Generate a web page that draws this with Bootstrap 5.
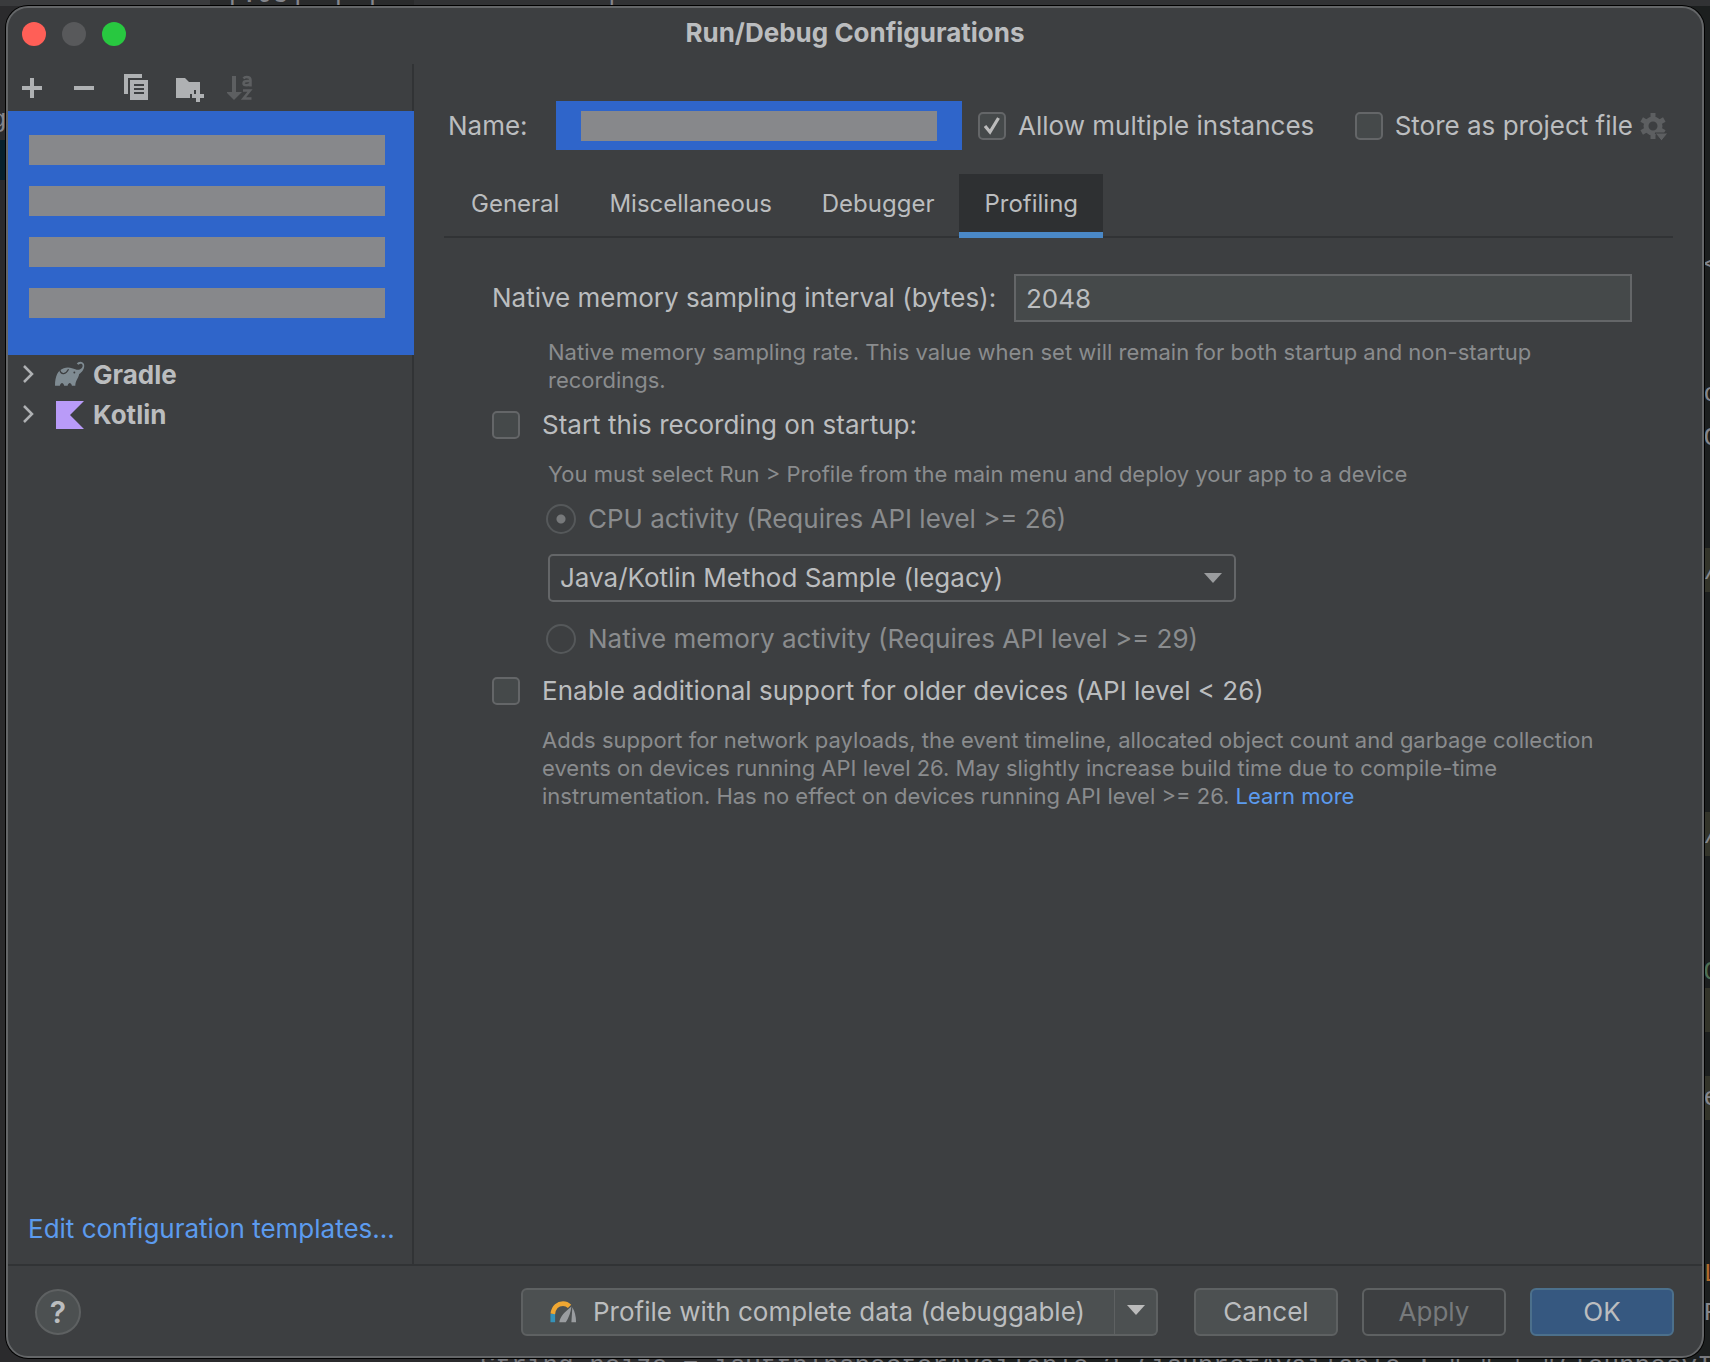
<!DOCTYPE html>
<html lang="en" data-bs-theme="dark">
<head>
<meta charset="utf-8">
<meta name="viewport" content="width=device-width, initial-scale=1">
<title>Run/Debug Configurations</title>
<link href="https://cdn.jsdelivr.net/npm/bootstrap@5.3.0/dist/css/bootstrap.min.css" rel="stylesheet">
<style>
:root{--panel:#3d3f41;--line:#313335;--edge:#646668;--ink:#bbbdbf;--dim:#8a8c8e;--field:#45494a;--sel:#2f65ca;--redact:#87888b;--link:#5c9bee}
body{font-family:Inter,"Liberation Sans",sans-serif;font-size:26px;line-height:32px;color:var(--ink);background:#1f2021;min-height:100vh;overflow:hidden}
.stage{min-height:100vh;padding:6px 6px 4px}
/* editor behind the dialog */
.backdrop{position:absolute;inset:0;overflow:hidden;font-family:"Liberation Mono",monospace;font-size:26px;line-height:32px;color:#85868c;background:linear-gradient(90deg,#2b2b2d 50%,#1c1f1f 50%)}
.backdrop span{position:absolute;white-space:pre}
.backdrop .bd-top{left:0;top:0;height:6px;right:0;background:linear-gradient(90deg,#3a3b3d 210px,#2a2b2c 210px 414px,#313234 414px)}
.backdrop .bd-bottom{left:480px;bottom:-20px;color:#77787d}
.backdrop .bd-strip{right:0;width:6px;height:44px;background:#33342a}
.backdrop .bd-char{right:-9px}
.backdrop .bd-left{left:0;top:140px;width:6px;height:40px;background:#07212c}
.dialog{position:relative;flex:1;background:var(--panel);border:2px solid var(--edge);border-radius:22px;box-shadow:0 0 0 1px #000;overflow:hidden}
.titlebar{height:56px;display:grid;grid-template-columns:1fr auto 1fr;align-items:center;padding:0 14px 4px}
.titlebar h1{font-size:26px;line-height:32px;font-weight:700;margin:0;padding-bottom:2px;color:var(--ink)}
.light{width:24px;height:24px;border-radius:50%;border:0;padding:0}
.l-close{background:#ff5f57}.l-min{background:#58595b}.l-zoom{background:#28c840}
.sidebar{width:406px;border-right:2px solid var(--line)}
.tools{height:47px;padding:0 14px}
.tools button,.gear{background:none;border:0;padding:0;color:#afb1b3;display:block;line-height:0}
.tools button:disabled{color:#5d5f61}
.picked{background:var(--sel);height:244px;padding:24px 29px 0 21px;gap:21px;margin-right:-2px}
.redact{background:var(--redact);height:30px}
.node{height:40px;padding-left:14px;font-weight:700}
a{color:var(--link);text-decoration:none}
.edit-link{margin:0 0 19px 20px}
.main{padding:37px 29px 0 30px}
.name-label{flex:0 0 112px;padding-left:4px}
.namebox{width:406px;height:49px;background:var(--sel);border:0;padding:0 25px}
.multi{margin-left:16px;gap:12px}
.store{gap:12px}
.gear{margin-left:7px}
.tick{appearance:none;width:28px;height:28px;margin:0;flex:none;background:var(--field);border:2px solid var(--edge);border-radius:5px}
.tick:checked{background:var(--field) url("data:image/svg+xml,%3Csvg xmlns='http://www.w3.org/2000/svg' viewBox='0 0 24 24'%3E%3Cpath d='M5 12l5 6L18.500 4' fill='none' stroke='%23bbb' stroke-width='3.200'/%3E%3C/svg%3E") center/24px 24px no-repeat}
.dot{appearance:none;width:30px;height:30px;margin:0;flex:none;border:2px solid #55585a;border-radius:50%}
.dot:checked{background:radial-gradient(circle,#77797b 4px,transparent 5px)}
.nav-tabs{--bs-nav-tabs-border-width:0;height:64px;border-bottom:2px solid var(--line);padding-left:2px}
.nav-tabs .nav-link{height:64px;padding:0 25px 4px;font-size:24px;color:var(--ink);border:0;border-radius:0;margin:0}
.nav-tabs .nav-link.active{background:#2e3032;color:var(--ink);border-bottom:6px solid #4a88c7;padding:2px 25px 0}
.pane{padding:36px 41px 0 48px}
.interval label{flex:0 0 522px}
.box{height:48px;background:var(--field);border:2px solid var(--edge);border-radius:0;color:var(--ink);padding:0 10px;min-width:0}
.hint{font-size:22px;line-height:28px;color:var(--dim);margin:16px 0 15px}
.hint.deep{margin-left:56px}
.hint.flat{margin-left:50px}
.opt{gap:22px}
.opt + .hint{margin-top:19px}
.rad{margin-left:54px;gap:12px;color:var(--dim)}
.pick{position:relative;width:688px;margin:19px 0 21px 56px}
.pick select{appearance:none;display:block;width:100%;height:48px;background:transparent;border:2px solid var(--edge);border-radius:5px;color:var(--ink);padding:0 10px}
.pick svg{position:absolute;right:14px;top:19px;pointer-events:none}
.footer{height:92px;border-top:2px solid var(--line);padding:2px 28px 0 27px;gap:24px}
.act{height:48px;width:144px;border:2px solid #5e6162;border-radius:6px;background:#4c5051;color:var(--ink);line-height:32px;padding:0}
.act.plain{background:transparent;color:#777a7c}
.act.go{background:#365880;border-color:#4c708c}
.split{margin-right:12px}
.act.wide{width:594px;border-radius:6px 0 0 6px;border-right-width:1px;padding-left:27px;text-align:left}
.act.more{width:43px;border-radius:0 6px 6px 0;border-left-width:0}
.act.more svg{display:block;margin:0 auto}
.help{width:46px;height:46px;border-radius:50%;border:2px solid #5e6162;background:#4c5051;color:var(--ink);font-weight:600;font-size:30px;line-height:32px;padding:0}
</style>
<script src="https://cdn.jsdelivr.net/npm/bootstrap@5.3.0/dist/js/bootstrap.bundle.min.js" defer></script>
</head>
<body>
<div class="backdrop" aria-hidden="true">
<span class="bd-top"></span><span class="bd-left"></span>
<span style="left:226px;top:-21px">[:JU]</span><span style="left:332px;top:-21px">[-]</span><span style="left:604px;top:-21px">|</span>
<span style="left:-9px;top:104px">g</span>
<span class="bd-bottom">String noize = isHttpInspectorAvailable ? (isHprofAvailable : " " + "(TouhposvIntegram</span>
<span class="bd-strip" style="top:548px"></span><span class="bd-strip" style="top:812px"></span><span class="bd-strip" style="top:988px"></span><span class="bd-strip" style="top:1076px"></span>
<span class="bd-char" style="top:249px">&lt;</span><span class="bd-char" style="top:378px">o</span><span class="bd-char" style="top:422px">C</span><span class="bd-char" style="top:556px">/</span><span class="bd-char" style="top:820px">/</span><span class="bd-char" style="top:956px;color:#4e6e55">Q</span><span class="bd-char" style="top:1082px">e</span><span class="bd-char" style="top:1258px;color:#b06a2c">L</span><span class="bd-char" style="top:1297px">F</span>
</div>
<div class="stage d-flex">
<div class="dialog d-flex flex-column" role="dialog" aria-labelledby="ttl">
<header class="titlebar">
<div class="d-flex gap-3"><button class="light l-close" aria-label="Close"></button><button class="light l-min" aria-label="Minimize"></button><button class="light l-zoom" aria-label="Zoom"></button></div>
<h1 id="ttl">Run/Debug Configurations</h1>
</header>
<div class="d-flex flex-grow-1">
<aside class="sidebar d-flex flex-column flex-shrink-0">
<div class="tools d-flex align-items-center">
<button aria-label="Add"><svg width="52" height="32"><path d="M0 16h20M10 6v20" stroke="currentColor" stroke-width="4"/></svg></button>
<button aria-label="Remove"><svg width="50" height="32"><path d="M0 16h20" stroke="currentColor" stroke-width="4"/></svg></button>
<button aria-label="Copy"><svg width="52" height="32"><path d="M0 2h18v4H4v16H0z" fill="currentColor"/><path fill-rule="evenodd" d="M6 8h18v20H6zM10 12v2h10v-2zM10 16v2h10v-2zM10 20v2h10v-2z" fill="currentColor"/></svg></button>
<button aria-label="New folder"><svg width="51" height="32"><path d="M0 6h9l4 4h11v8h-6v4h-4v4H0z" fill="currentColor"/><path d="M16 24h12M22 18v12" stroke="currentColor" stroke-width="4"/></svg></button>
<button aria-label="Sort" disabled><svg width="28" height="32"><path d="M5 4h4v16h6l-8 8-8-8h6z" fill="currentColor"/><g fill="none" stroke="currentColor" stroke-width="2.500"><path d="M16.500 6.500q1-1.500 3-1.500 4 0 4 3v6.500M23.500 9h-3q-4 0-4 2.200 0 2 3 2 3.500 0 4-2.500M16 18.500h7l-6.500 8h8"/></g></svg></button>
</div>
<div class="picked d-flex flex-column"><div class="redact"></div><div class="redact"></div><div class="redact"></div><div class="redact"></div></div>
<div class="node d-flex align-items-center"><svg class="me-3" width="17" height="24" viewBox="0 0 17 24"><path d="M2 3l8 8-8 8" fill="none" stroke="#afb1b3" stroke-width="2.500"/></svg>
<svg class="me-2" width="30" height="28" viewBox="0 0 31 28"><path d="M0 25C0 15 3 9 9 7c5-2 9 0 12 1 4 2 8-1 7.500-4-.5-2-3-2-4-.5L22.500 2.500C24-.5 29-.5 30 3c1 4-2 8-5 10-1 5-4 7-4 12h-3.500c-1-3.500-3.500-3.500-4.500 0H9.500c-1-3.500-3.500-3.500-4.500 0z" fill="#7f8b92"/><path d="M5 9q1 4 4 3.500T14 8" fill="none" stroke="#3d3f41" stroke-width="1.300"/><circle cx="20" cy="11.500" r="1" fill="#3d3f41"/></svg>Gradle</div>
<div class="node d-flex align-items-center"><svg class="me-3" width="17" height="24" viewBox="0 0 17 24"><path d="M2 3l8 8-8 8" fill="none" stroke="#afb1b3" stroke-width="2.500"/></svg>
<svg class="me-2" width="30" height="28" viewBox="0 0 30 28"><path d="M1 0h28L15 14l14 14H1z" fill="#b99bf8"/></svg>Kotlin</div>
<a href="#" class="mt-auto text-nowrap edit-link">Edit configuration templates...</a>
</aside>
<main class="main flex-grow-1">
<div class="d-flex align-items-center">
<label for="nm" class="name-label">Name:</label>
<button id="nm" class="namebox"><span class="redact d-block"></span></button>
<label class="d-flex align-items-center multi"><input type="checkbox" class="tick" checked>Allow multiple instances</label>
<label class="d-flex align-items-center store ms-auto"><input type="checkbox" class="tick">Store as project file</label>
<button class="gear" aria-label="Storage options"><svg width="33" height="32" viewBox="0 0 33 32"><g fill="none" stroke="#5d5f61"><circle cx="13" cy="16" r="7" stroke-width="5"/><path d="M13 3v5M13 24v5M1.700 9.500l4.300 2.500M20 20l4.300 2.500M1.700 22.500L6 20M20 12l4.300-2.500" stroke-width="5"/></g><path d="M15 23h13l-6.500 8z" fill="#5d5f61" stroke="#3d3f41"/></svg></button>
</div>
<ul class="nav nav-tabs mt-4" role="tablist">
<li class="nav-item"><button class="nav-link" role="tab">General</button></li>
<li class="nav-item"><button class="nav-link" role="tab">Miscellaneous</button></li>
<li class="nav-item"><button class="nav-link" role="tab">Debugger</button></li>
<li class="nav-item"><button class="nav-link active" role="tab" aria-selected="true">Profiling</button></li>
</ul>
<div class="pane">
<div class="d-flex align-items-center interval"><label for="iv" class="text-nowrap">Native memory sampling interval (bytes):</label><input id="iv" class="box flex-grow-1" value="2048"></div>
<p class="hint deep">Native memory sampling rate. This value when set will remain for both startup and non-startup recordings.</p>
<label class="d-flex align-items-center opt"><input type="checkbox" class="tick">Start this recording on startup:</label>
<p class="hint deep">You must select Run &gt; Profile from the main menu and deploy your app to a device</p>
<label class="d-flex align-items-center rad"><input type="radio" name="k" class="dot" checked disabled>CPU activity (Requires API level &gt;= 26)</label>
<div class="pick"><select aria-label="CPU recording configuration"><option>Java/Kotlin Method Sample (legacy)</option></select><svg width="18" height="11"><path d="M0 0h18l-9 10z" fill="#9a9c9e"/></svg></div>
<label class="d-flex align-items-center rad mb-3"><input type="radio" name="k" class="dot" disabled>Native memory activity (Requires API level &gt;= 29)</label>
<label class="d-flex align-items-center opt pt-1"><input type="checkbox" class="tick">Enable additional support for older devices (API level &lt; 26)</label>
<p class="hint flat">Adds support for network payloads, the event timeline, allocated object count and garbage collection events on devices running API level 26. May slightly increase build time due to compile-time instrumentation. Has no effect on devices running API level &gt;= 26. <a href="#">Learn more</a></p>
</div>
</main>
</div>
<footer class="footer d-flex align-items-center">
<button class="help me-auto" aria-label="Help">?</button>
<div class="d-flex split"><button class="act wide d-flex align-items-center text-nowrap"><svg class="me-3" width="27" height="24" viewBox="0 0 29 24"><path d="M3 23v-9" stroke="#3592b8" stroke-width="5"/><path d="M3 14C4 6 9 3 14 3q4 0 7 3" fill="none" stroke="#f0a732" stroke-width="5"/><path d="M10 23C11 16 16 12 23 6q-1 9-6 17zM24 7q4 7 4 16h-5z" fill="#9a9da0"/></svg>Profile with complete data (debuggable)</button><button class="act more" aria-label="More"><svg width="18" height="14"><path d="M0 0h18l-9 10z" fill="#bbb"/></svg></button></div>
<button class="act">Cancel</button><button class="act plain" disabled>Apply</button><button class="act go">OK</button>
</footer>
</div>
</div>
</body>
</html>
